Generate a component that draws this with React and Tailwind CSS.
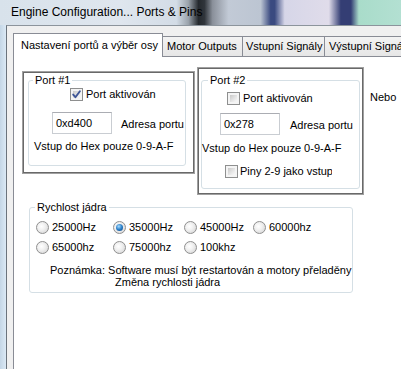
import React from "react";

function Checkbox({ checked }) {
  return (
    <div className="relative w-[13px] h-[13px] shrink-0 border border-[#8e8f8f] bg-[#f4f4f4] p-[2px]">
      <div className="w-full h-full bg-[linear-gradient(135deg,#c9c9c9,#ececec_70%,#f8f8f8)]" />
      {checked && (
        <svg className="absolute left-[0px] top-[0px]" width="11" height="11" viewBox="0 0 11 11">
          <path d="M2.2 5.6 L4.4 8.2 L8.9 2.2" fill="none" stroke="#3f5697" strokeWidth="1.9" strokeLinecap="round" strokeLinejoin="round" />
        </svg>
      )}
    </div>
  );
}

function Radio({ checked }) {
  return (
    <div className="w-[13px] h-[13px] shrink-0 rounded-full border border-[#8f8f8f] bg-[radial-gradient(circle_at_40%_40%,#ffffff,#f0f0f0_40%,#cfcfcf)] flex items-center justify-center">
      {checked && (
        <div className="w-[7px] h-[7px] rounded-full bg-[radial-gradient(circle_at_40%_35%,#a6dcff,#2b7fc8_50%,#0b3f7a)]" />
      )}
    </div>
  );
}

function TextBox({ value }) {
  return (
    <div className="w-[60px] h-[22px] shrink-0 border border-[#c9cdd2] border-t-[#abadb3] bg-white flex items-center pl-[3px]">
      {value}
    </div>
  );
}

function RadioItem({ label, checked, w }) {
  return (
    <div className={`flex items-center gap-[3px] ${w}`}>
      <Radio checked={checked} />
      <span>{label}</span>
    </div>
  );
}

export default function App() {
  return (
    <div className="w-[401px] h-[369px] overflow-hidden flex flex-col font-['Liberation_Sans',Arial,sans-serif] text-[11px] leading-[13px] text-black">
      {/* Title bar */}
      <div className="h-[25px] shrink-0 flex items-center pl-[11px] bg-[linear-gradient(to_right,#d8e2eb_0%,#dfe6ee_30%,#d3dce6_44%,#9aa2ab_47%,#25292e_49.5%,#30353b_51%,#8a909a_53%,#c2cad6_57%,#bcc5d2_65%,#3a4a80_67.5%,#3a4a80_68.5%,#d6d6e8_71%,#e0dcea_82%,#343e74_85%,#343e74_87.5%,#a9dcca_89.5%,#b3e0d2_100%)]">
        <span className="text-[12px] leading-[14px] pb-[1px]">Engine Configuration... Ports &amp; Pins</span>
      </div>

      <div className="flex flex-1 min-h-0">
        {/* left glass frame */}
        <div className="w-[6px] shrink-0 bg-[linear-gradient(to_right,#c4d6e6,#dbe9f5)]" />
        {/* client area */}
        <div className="flex-1 flex flex-col border-l border-t border-l-[#6b737c] border-t-[#8c949c] bg-[#f0f0f0] pl-[6px]">
          {/* tab strip */}
          <div className="h-[30px] shrink-0 flex items-end whitespace-nowrap">
            <div className="relative z-10 mb-[-1px] h-[24px] w-[150px] shrink-0 bg-white border-l border-t border-r border-[#898c95] pl-[7px] pt-[5px]">
              Nastavení portů a výběr osy
            </div>
            <div className="h-[20px] w-[80px] shrink-0 border-t border-r border-[#898c95] bg-[linear-gradient(to_bottom,#f3f3f3,#e6e6e6)] pl-[4px] pt-[3px]">
              Motor Outputs
            </div>
            <div className="h-[20px] w-[82px] shrink-0 border-t border-r border-[#898c95] bg-[linear-gradient(to_bottom,#f3f3f3,#e6e6e6)] pl-[3px] pt-[3px]">
              Vstupní Signály
            </div>
            <div className="h-[20px] w-[90px] shrink-0 border-t border-r border-[#898c95] bg-[linear-gradient(to_bottom,#f3f3f3,#e6e6e6)] pl-[4px] pt-[3px]">
              Výstupní Signály
            </div>
          </div>

          {/* tab panel */}
          <div className="flex-1 border-l border-t border-[#898c95] bg-white flex flex-col">
            <div className="flex items-start">
              {/* Port #1 */}
              <div className="mt-[14px] ml-[8px] w-[173px] h-[103px] shrink-0 border border-[#a0a0a0]">
                <div className="h-full border border-[#696969] bg-white pl-[2px] pt-[0px]">
                  <fieldset className="ml-[2px] mt-[1px] w-[158px] h-[92px] border border-[#d5dfe5] rounded-[3px]">
                    <legend className="ml-[4px] px-[2px] leading-[13px]">Port #1</legend>
                    <div className="flex items-center gap-[3px] mt-[1px] ml-[41px]">
                      <Checkbox checked />
                      <span>Port aktivován</span>
                    </div>
                    <div className="flex items-center gap-[9px] mt-[11px] ml-[23px]">
                      <TextBox value="0xd400" />
                      <span className="mt-[2px]">Adresa portu</span>
                    </div>
                    <div className="mt-[6px] ml-[5px] whitespace-nowrap">Vstup do Hex pouze 0-9-A-F</div>
                  </fieldset>
                </div>
              </div>

              {/* Port #2 */}
              <div className="mt-[10px] ml-[2px] w-[167px] h-[128px] shrink-0 border border-[#a0a0a0]">
                <div className="h-full border border-[#696969] bg-white pl-[0px]">
                  <fieldset className="ml-[2px] mt-[5px] w-[159px] h-[115px] border border-[#d5dfe5] rounded-[3px]">
                    <legend className="ml-[6px] px-[2px] leading-[13px]">Port #2</legend>
                    <div className="flex items-center gap-[3px] mt-[5px] ml-[25px]">
                      <Checkbox />
                      <span>Port aktivován</span>
                    </div>
                    <div className="flex items-center gap-[10px] mt-[8px] ml-[18px]">
                      <TextBox value="0x278" />
                      <span className="mt-[2px]">Adresa portu</span>
                    </div>
                    <div className="mt-[7px] ml-[0px] whitespace-nowrap">Vstup do Hex pouze 0-9-A-F</div>
                    <div className="flex items-center gap-[2px] mt-[10px] ml-[23px]">
                      <Checkbox />
                      <span className="w-[92px] overflow-hidden whitespace-nowrap">Piny 2-9 jako vstupy</span>
                    </div>
                  </fieldset>
                </div>
              </div>

              <div className="ml-[6px] mt-[34px]">Nebo</div>
            </div>

            {/* Rychlost jádra */}
            <fieldset className="mt-[6px] ml-[15px] w-[324px] h-[92px] shrink-0 border border-[#d5dfe5] rounded-[3px]">
              <legend className="ml-[5px] px-[2px] leading-[13px]">Rychlost jádra</legend>
              <div className="flex mt-[7px] ml-[6px] whitespace-nowrap">
                <RadioItem label="25000Hz" w="w-[77px]" />
                <RadioItem label="35000Hz" checked w="w-[71px]" />
                <RadioItem label="45000Hz" w="w-[69px]" />
                <RadioItem label="60000hz" w="" />
              </div>
              <div className="flex mt-[7px] ml-[6px] whitespace-nowrap">
                <RadioItem label="65000hz" w="w-[77px]" />
                <RadioItem label="75000hz" w="w-[71px]" />
                <RadioItem label="100khz" w="w-[69px]" />
              </div>
              <div className="mt-[10px] leading-[12px] whitespace-nowrap">
                <div className="ml-[20px]">Poznámka: Software musí být restartován a motory přeladěny</div>
                <div className="ml-[85px]">Změna rychlosti jádra</div>
              </div>
            </fieldset>
          </div>
        </div>
      </div>
    </div>
  );
}
